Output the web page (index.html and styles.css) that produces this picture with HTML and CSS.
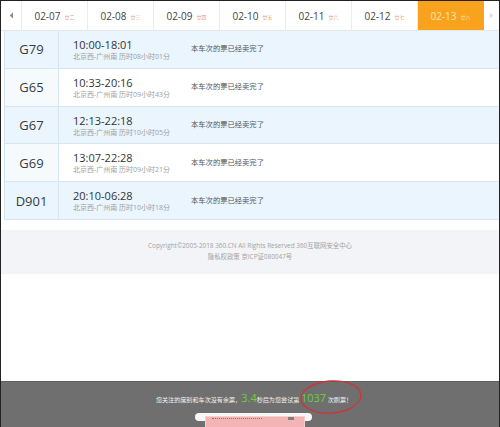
FILE: index.html
```html
<!DOCTYPE html>
<html lang="zh-CN">
<head>
<meta charset="utf-8">
<title>刷票</title>
<link rel="stylesheet" href="styles.css">
</head>
<body>
<div class="frame">
  <div class="dates">
    <div class="arrow arrow-left"><svg width="5" height="7" viewBox="0 0 5 7"><path d="M4 0.5 L0.8 3.5 L4 6.5 Z" fill="#888"/></svg></div>
    <div class="tab"><span class="d">02-07</span><span class="l">廿二</span></div>
    <div class="tab"><span class="d">02-08</span><span class="l">廿三</span></div>
    <div class="tab"><span class="d">02-09</span><span class="l">廿四</span></div>
    <div class="tab"><span class="d">02-10</span><span class="l">廿五</span></div>
    <div class="tab"><span class="d">02-11</span><span class="l">廿六</span></div>
    <div class="tab"><span class="d">02-12</span><span class="l">廿七</span></div>
    <div class="tab active"><span class="d">02-13</span><span class="l">廿八</span></div>
    <div class="arrow arrow-right"><svg width="5" height="7" viewBox="0 0 5 7"><path d="M1 0.5 L4.2 3.5 L1 6.5 Z" fill="#ddd"/></svg></div>
  </div>

  <div class="trains">
    <div class="row">
      <div class="no">G79</div>
      <div class="info"><div class="time">10:00-18:01</div><div class="sub">北京西-广州南 历时08小时01分</div></div>
      <div class="status">本车次的票已经卖完了</div>
    </div>
    <div class="row">
      <div class="no">G65</div>
      <div class="info"><div class="time">10:33-20:16</div><div class="sub">北京西-广州南 历时09小时43分</div></div>
      <div class="status">本车次的票已经卖完了</div>
    </div>
    <div class="row">
      <div class="no">G67</div>
      <div class="info"><div class="time">12:13-22:18</div><div class="sub">北京西-广州南 历时10小时05分</div></div>
      <div class="status">本车次的票已经卖完了</div>
    </div>
    <div class="row">
      <div class="no">G69</div>
      <div class="info"><div class="time">13:07-22:28</div><div class="sub">北京西-广州南 历时09小时21分</div></div>
      <div class="status">本车次的票已经卖完了</div>
    </div>
    <div class="row">
      <div class="no">D901</div>
      <div class="info"><div class="time">20:10-06:28</div><div class="sub">北京西-广州南 历时10小时18分</div></div>
      <div class="status">本车次的票已经卖完了</div>
    </div>
  </div>

  <div class="footer">
    <div>Copyright©2005-2018 360.CN All Rights Reserved 360互联网安全中心</div>
    <div>隐私权政策 京ICP证080047号</div>
  </div>

  <div class="bar">
    <div class="msg">您关注的席别和车次没有余票，<span class="num">3.4</span>秒后为您尝试第 <span class="num">1037</span> 次刷票！</div>
    <div class="pill"><div class="pink"><span class="dots"></span><span class="box"></span></div></div>
  </div>

  <svg class="ring" width="66" height="38" viewBox="0 0 66 38"><ellipse cx="33" cy="19" rx="30" ry="16" transform="rotate(-4 33 19)" fill="none" stroke="#c9373d" stroke-width="1.4"/></svg>
</div>
</body>
</html>
```

FILE: styles.css
```css
* { box-sizing: border-box; }
html, body { margin: 0; padding: 0; }
body {
  width: 500px;
  height: 427px;
  overflow: hidden;
  font-family: "Open Sans", "Noto Sans CJK SC", sans-serif;
  background: #fff;
}
.frame {
  position: relative;
  width: 500px;
  height: 427px;
  border: 1px solid #222;
  border-bottom: none;
  display: flex;
  flex-direction: column;
  overflow: hidden;
}
.dates {
  display: flex;
  height: 30px;
  border-bottom: 1px solid #e3e8ec;
  background: #fff;
  flex: none;
}
.arrow {
  display: flex;
  align-items: center;
  justify-content: center;
}
.arrow-left { width: 21px; border-right: 1px solid #ececec; }
.arrow-right { flex: 1; }
.tab {
  width: 66px;
  display: flex;
  align-items: center;
  justify-content: center;
  gap: 4px;
  border-right: 1px solid #ececec;
  padding-top: 1px;
}
.tab .d { font-size: 10px; color: #444; }
.tab .l { font-size: 5px; color: #e9a46a; }
.tab.active { background: #f8a21e; border-right-color: #f8a21e; }
.tab.active .d { color: #fde6b8; }
.tab.active .l { color: #fde6b8; }

.trains {
  margin-left: 3px;
  border-left: 1px solid #d3e4ef;
  flex: none;
}
.row {
  display: flex;
  height: 37.8px;
  border-bottom: 1px solid #d6e6f1;
  background: #fff;
}
.row:nth-child(odd) { background: #eaf5fd; }
.row:nth-child(even) .no { background: #f5fafd; }
.no {
  width: 54px;
  border-right: 1px solid #d6e6f1;
  display: flex;
  align-items: center;
  justify-content: center;
  font-size: 13px;
  color: #3a3a3a;
}
.info {
  width: 132px;
  padding-left: 14px;
  padding-top: 6px;
}
.time { font-size: 11px; color: #333; line-height: 15px; }
.sub { font-size: 7px; color: #a0a0a0; line-height: 10px; }
.status {
  display: flex;
  align-items: center;
  font-size: 7.3px;
  color: #555;
  padding-bottom: 2px;
}

.footer {
  margin-top: 10px;
  height: 44px;
  background: #f3f4f7;
  display: flex;
  flex-direction: column;
  align-items: center;
  padding-top: 10px;
  font-size: 6.4px;
  line-height: 11px;
  color: #a3a3a3;
  flex: none;
}

.bar {
  margin-top: auto;
  height: 46px;
  background: #6f6f6f;
  border-top: 1px solid #5f5f5f;
  display: flex;
  flex-direction: column;
  align-items: center;
  flex: none;
}
.msg {
  margin-top: 8px;
  margin-left: 8px;
  font-size: 6.1px;
  color: #f2f2f2;
  line-height: 16px;
  white-space: nowrap;
}
.msg .num { font-size: 11px; color: #6fcc3a; }
.pill {
  position: relative;
  margin-top: 5px;
  margin-left: 7px;
  width: 117px;
  height: 8px;
  background: #f7f7f7;
  border-radius: 4px;
}
.pink {
  position: absolute;
  left: 10px;
  top: 3px;
  width: 100px;
  height: 14px;
  background: #f2b4b4;
  border: 1px solid #f6d0d0;
}
.dots {
  position: absolute;
  left: 6px;
  top: 1px;
  width: 50px;
  height: 1px;
  border-top: 1px dotted #a86868;
}
.box {
  position: absolute;
  left: 82px;
  top: 0;
  width: 6px;
  height: 3px;
  background: #8a7a7a;
}
.ring {
  position: absolute;
  left: 297px;
  top: 377px;
}
```
